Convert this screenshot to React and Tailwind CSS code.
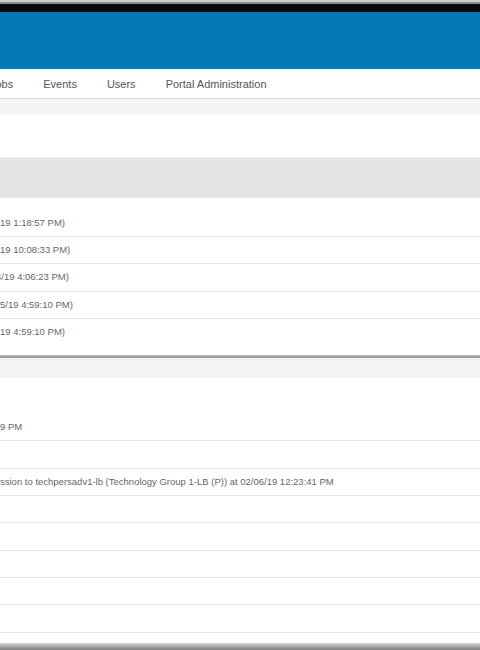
const navItems = ["Jobs", "Events", "Users", "Portal Administration"];

const sessions = [
  { text: "19 1:18:57 PM)", h: "h-[27px]" },
  { text: "19 10:08:33 PM)", h: "h-[27px]" },
  { text: "4/19 4:06:23 PM)", h: "h-[28px]", shift: true },
  { text: "5/19 4:59:10 PM)", h: "h-[27px]" },
  { text: "19 4:59:10 PM)", h: "h-[27px]", last: true },
];

const events = [
  { text: "9 PM", h: "h-[27px]" },
  { text: "", h: "h-[28px]" },
  { text: "ssion to techpersadv1-lb (Technology Group 1-LB (P)) at 02/06/19 12:23:41 PM", h: "h-[27px]" },
  { text: "", h: "h-[27px]" },
  { text: "", h: "h-[28px]" },
  { text: "", h: "h-[27px]" },
  { text: "", h: "h-[27px]" },
  { text: "", h: "h-[28px]" },
];

export default function App() {
  return (
    <div className="h-[650px] w-[480px] overflow-hidden bg-white font-['Liberation_Sans',Arial,sans-serif] flex flex-col">
      {/* window chrome */}
      <div className="h-[2px] shrink-0 bg-[#d2d2d2]" />
      <div className="h-[2px] shrink-0 bg-[#8e8e8e]" />
      <div className="h-[8px] shrink-0 bg-[#0b0b0b]" />

      <header className="h-[57px] bg-[#0479b7] shrink-0" />

      <nav className="h-[30px] shrink-0 flex items-center gap-[30px] pt-[1px] border-b border-[#dddddd] text-[11px] text-[#555555]">
        {navItems.map((n, i) => (
          <span key={n} className={i === 0 ? "-ml-[10px]" : ""}>
            {n}
          </span>
        ))}
      </nav>

      <div className="h-[16px] shrink-0 bg-[#f4f4f4]" />
      <div className="h-[42px] shrink-0 bg-white" />

      {/* sessions panel */}
      <div className="h-[41px] shrink-0 bg-[#e4e4e4] border-y border-[#ececec]" />
      <div className="pt-[12px] pb-[9px] shrink-0">
        {sessions.map((r, i) => (
          <div
            key={i}
            className={`${r.h} flex items-center text-[9.5px] text-[#666666] ${r.last ? "" : "border-b border-[#e6e6e6]"}`}
          >
            <span className={r.shift ? "-ml-[4px]" : ""}>{r.text}</span>
          </div>
        ))}
      </div>
      <div className="h-[3px] shrink-0 bg-gradient-to-b from-[#bdbdbd] to-[#8f8f8f]" />

      {/* events panel */}
      <div className="h-[20px] shrink-0 bg-[#f3f3f3]" />
      <div className="h-[36px] shrink-0 bg-white" />
      <div className="flex-1 overflow-hidden">
        {events.map((r, i) => (
          <div
            key={i}
            className={`${r.h} flex items-center border-b border-[#e8e8e8] text-[9.5px] text-[#666666] whitespace-nowrap`}
          >
            {r.text}
          </div>
        ))}
      </div>
      <div className="h-[7px] shrink-0 bg-gradient-to-b from-[#d6d6d6] to-[#7c7c7c]" />
    </div>
  );
}
